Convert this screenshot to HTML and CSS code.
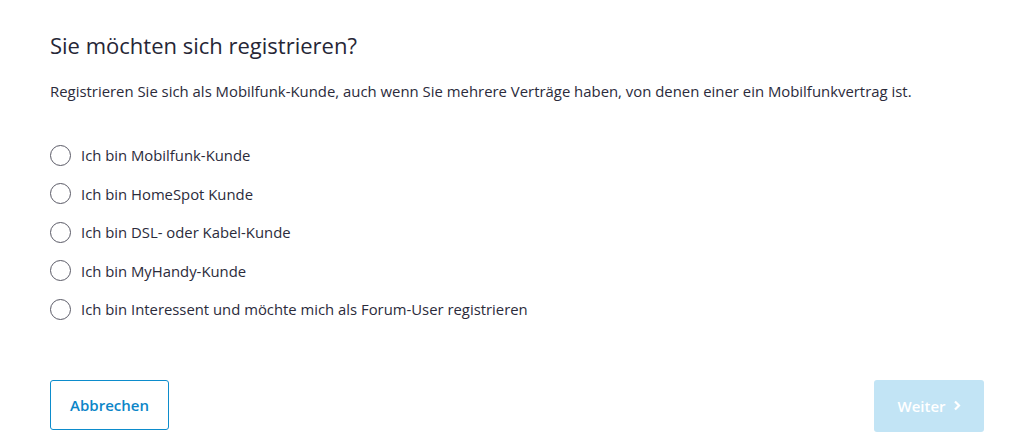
FILE: index.html
```html
<!DOCTYPE html>
<html lang="de">
<head>
<meta charset="utf-8">
<link rel="stylesheet" href="styles.css">
</head>
<body>
<div class="page">
  <h1 class="title">Sie möchten sich registrieren?</h1>
  <p class="intro">Registrieren Sie sich als Mobilfunk-Kunde, auch wenn Sie mehrere Verträge haben, von denen einer ein Mobilfunkvertrag ist.</p>
  <ul class="options">
    <li class="option"><span class="radio"></span><span class="label">Ich bin Mobilfunk-Kunde</span></li>
    <li class="option"><span class="radio"></span><span class="label">Ich bin HomeSpot Kunde</span></li>
    <li class="option"><span class="radio"></span><span class="label">Ich bin DSL- oder Kabel-Kunde</span></li>
    <li class="option"><span class="radio"></span><span class="label">Ich bin MyHandy-Kunde</span></li>
    <li class="option"><span class="radio"></span><span class="label">Ich bin Interessent und möchte mich als Forum-User registrieren</span></li>
  </ul>
  <div class="actions">
    <button class="btn btn-secondary">Abbrechen</button>
    <button class="btn btn-primary">Weiter <svg class="chev" width="8" height="11" viewBox="0 0 8 11"><path d="M2 1.5 L6 5.5 L2 9.5" fill="none" stroke="#fff" stroke-width="2.2"/></svg></button>
  </div>
</div>
</body>
</html>
```
FILE: styles.css
```css
html, body { margin: 0; padding: 0; background: #fff; }
body { font-family: "Open Sans", "Noto Sans", sans-serif; color: #2b2b3b; }
.page { padding: 28px 46px 0 50px; }
.title { margin: 0; font-size: 22px; font-weight: 400; line-height: 34px; color: #262636; }
.intro { margin: 18px 0 0; font-size: 14.9px; line-height: 22px; color: #2b2b3b; }
.options { list-style: none; margin: 42px 0 0; padding: 0; display: flex; flex-direction: column; gap: 16.5px; }
.option { display: flex; align-items: center; height: 22px; }
.radio { border: 1.2px solid #5a5a66; border-radius: 50%; box-sizing: border-box; width: 21px; height: 21px; margin-right: 10px; flex: none; }
.label { font-size: 14.85px; color: #2b2b3b; }
.actions { display: flex; justify-content: space-between; margin-top: 60px; }
.btn { font-family: inherit; font-size: 15px; font-weight: 600; border-radius: 3px; cursor: pointer; }
.btn-secondary { width: 119px; height: 50px; background: #fff; border: 1px solid #0c8ccc; color: #0c86c8; }
.btn-primary { width: 110px; height: 52px; padding-bottom: 2px; background: #c2e4f5; border: none; color: #fff; display: flex; align-items: center; justify-content: center; gap: 7px; }
.chev { display: block; }
```
